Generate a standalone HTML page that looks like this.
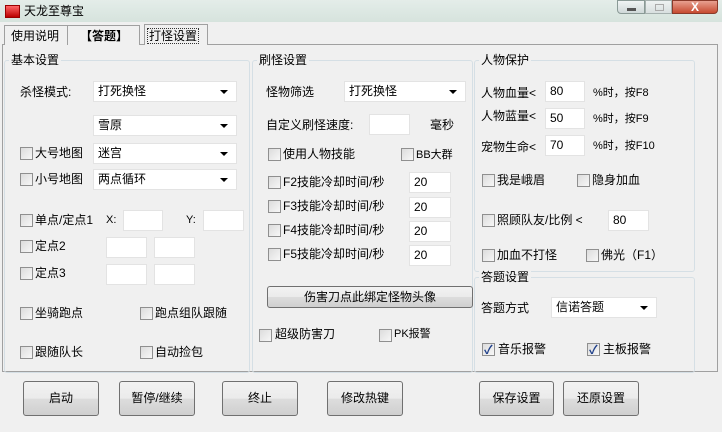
<!DOCTYPE html><html><head><meta charset="utf-8"><style>
*{margin:0;padding:0;box-sizing:border-box}
body{width:722px;height:432px;overflow:hidden;background:#f0f0f0;font:12px "Liberation Sans","Noto Sans CJK SC",sans-serif;color:#000;position:relative}
.a{position:absolute;white-space:nowrap}
.t{position:absolute;white-space:nowrap;line-height:14px}
.grp{position:absolute;border:1px solid #d5dfe5;border-radius:3px}
.gt{position:absolute;background:#f0f0f0;padding:0 2px;line-height:14px;top:-8px;left:4px}
.sel{position:absolute;background:#fff;border:1px solid #e3e3e3;height:21px;line-height:19px;padding-left:4px}
.sel:after{content:"";position:absolute;right:8px;top:8px;border:4px solid transparent;border-top:4px solid #000;border-bottom:0}
.in{position:absolute;background:#fff;border:1px solid #e3e3e3;height:21px;line-height:19px;padding-left:4px}
.cb{position:absolute;width:13px;height:13px;border:1px solid #8f8f8f;background:linear-gradient(135deg,#dcdcdc,#f7f7f7)}
.cb.c:after{content:"✓";position:absolute;left:1px;top:-3px;font-size:12px;color:#1e3f8a;font-weight:bold}
.btn{position:absolute;border:1px solid #707070;border-radius:3px;background:linear-gradient(#f2f2f2 0,#ebebeb 50%,#dddddd 51%,#cfcfcf 100%);text-align:center}
</style></head><body>
<div class="a" style="left:0;top:0;width:722px;height:22px;background:linear-gradient(#e4ede9,#d6e3dd)"></div>
<div class="a" style="left:5px;top:5px;width:15px;height:13px;background:linear-gradient(#f66,#b00);border:1px solid #900"></div>
<div class="t" style="left:24px;top:4px">天龙至尊宝</div>
<div class="a" style="left:617px;top:0;width:28px;height:14px;border:1px solid #8a9a96;border-radius:0 0 0 4px;background:linear-gradient(#f0f4f4,#cfd8d8)"><div class="a" style="left:9px;top:7px;width:9px;height:3px;background:#555"></div></div>
<div class="a" style="left:645px;top:0;width:27px;height:14px;border:1px solid #a5b0ae;background:linear-gradient(#eef2f2,#d8dfdf)"><div class="a" style="left:9px;top:3px;width:9px;height:7px;border:1px solid #aaa"></div></div>
<div class="a" style="left:672px;top:0;width:46px;height:14px;border:1px solid #8a3a2a;border-radius:0 0 4px 0;background:linear-gradient(#e8a090,#c74a30);color:#fff;text-align:center;font-weight:bold;line-height:12px">X</div>
<div class="a" style="left:2px;top:44px;width:716px;height:328px;border:1px solid #a0a0a0;background:#f0f0f0"></div>
<div class="a" style="left:4px;top:25px;width:64px;height:20px;border:1px solid #a0a0a0;border-bottom:0;background:#f0f0f0"></div><div class="t" style="left:11px;top:29px">使用说明</div>
<div class="a" style="left:68px;top:25px;width:72px;height:20px;border:1px solid #a0a0a0;border-bottom:0;border-left:0;background:#f0f0f0"></div><div class="t" style="left:80px;top:29px;font-weight:bold">【答题】</div>
<div class="a" style="left:144px;top:24px;width:64px;height:21px;border:1px solid #a0a0a0;border-bottom:0;background:#f0f0f0"></div><div class="t" style="left:147px;top:28px;border:1px dotted #333;padding:0 1px">打怪设置</div>
<div class="grp" style="left:4px;top:60px;width:246px;height:313px"><div class="gt">基本设置</div></div>
<div class="grp" style="left:252px;top:60px;width:221px;height:313px"><div class="gt">刷怪设置</div></div>
<div class="grp" style="left:474px;top:60px;width:221px;height:212px"><div class="gt">人物保护</div></div>
<div class="grp" style="left:474px;top:277px;width:221px;height:96px"><div class="gt">答题设置</div></div>
<!-- left -->
<div class="t" style="left:20px;top:85px">杀怪模式:</div>
<div class="sel" style="left:93px;top:81px;width:144px">打死换怪</div>
<div class="sel" style="left:93px;top:115px;width:144px">雪原</div>
<div class="cb" style="left:20px;top:147px"></div><div class="t" style="left:35px;top:146px">大号地图</div>
<div class="sel" style="left:93px;top:143px;width:144px">迷宫</div>
<div class="cb" style="left:20px;top:173px"></div><div class="t" style="left:35px;top:172px">小号地图</div>
<div class="sel" style="left:93px;top:169px;width:144px">两点循环</div>
<div class="cb" style="left:20px;top:214px"></div><div class="t" style="left:35px;top:213px">单点/定点1</div>
<div class="t" style="left:106px;top:213px;font-size:11px">X:</div><div class="in" style="left:123px;top:210px;width:40px"></div>
<div class="t" style="left:186px;top:213px;font-size:11px">Y:</div><div class="in" style="left:203px;top:210px;width:41px"></div>
<div class="cb" style="left:20px;top:240px"></div><div class="t" style="left:35px;top:239px">定点2</div>
<div class="in" style="left:106px;top:237px;width:41px"></div><div class="in" style="left:154px;top:237px;width:41px"></div>
<div class="cb" style="left:20px;top:267px"></div><div class="t" style="left:35px;top:266px">定点3</div>
<div class="in" style="left:106px;top:264px;width:41px"></div><div class="in" style="left:154px;top:264px;width:41px"></div>
<div class="cb" style="left:20px;top:307px"></div><div class="t" style="left:35px;top:306px">坐骑跑点</div>
<div class="cb" style="left:140px;top:307px"></div><div class="t" style="left:155px;top:306px">跑点组队跟随</div>
<div class="cb" style="left:20px;top:346px"></div><div class="t" style="left:35px;top:345px">跟随队长</div>
<div class="cb" style="left:140px;top:346px"></div><div class="t" style="left:155px;top:345px">自动捡包</div>
<!-- middle -->
<div class="t" style="left:266px;top:85px">怪物筛选</div>
<div class="sel" style="left:344px;top:81px;width:122px">打死换怪</div>
<div class="t" style="left:266px;top:118px">自定义刷怪速度:</div>
<div class="in" style="left:369px;top:114px;width:41px"></div>
<div class="t" style="left:430px;top:118px">毫秒</div>
<div class="cb" style="left:268px;top:148px"></div><div class="t" style="left:283px;top:147px">使用人物技能</div>
<div class="cb" style="left:401px;top:148px"></div><div class="t" style="left:416px;top:148px;font-size:11px">BB大群</div>
<div class="cb" style="left:268px;top:176px"></div><div class="t" style="left:283px;top:175px">F2技能冷却时间/秒</div><div class="in" style="left:409px;top:172px;width:42px">20</div>
<div class="cb" style="left:268px;top:200px"></div><div class="t" style="left:283px;top:199px">F3技能冷却时间/秒</div><div class="in" style="left:409px;top:197px;width:42px">20</div>
<div class="cb" style="left:268px;top:224px"></div><div class="t" style="left:283px;top:223px">F4技能冷却时间/秒</div><div class="in" style="left:409px;top:221px;width:42px">20</div>
<div class="cb" style="left:268px;top:248px"></div><div class="t" style="left:283px;top:247px">F5技能冷却时间/秒</div><div class="in" style="left:409px;top:245px;width:42px">20</div>
<div class="btn" style="left:267px;top:286px;width:206px;height:22px;line-height:20px">伤害刀点此绑定怪物头像</div>
<div class="cb" style="left:259px;top:329px"></div><div class="t" style="left:275px;top:327px">超级防害刀</div>
<div class="cb" style="left:379px;top:329px"></div><div class="t" style="left:394px;top:327px;font-size:11px">PK报警</div>
<!-- right -->
<div class="t" style="left:481px;top:86px">人物血量&lt;</div><div class="in" style="left:545px;top:81px;width:40px">80</div><div class="t" style="left:593px;top:86px;font-size:11px">%时，按F8</div>
<div class="t" style="left:481px;top:109px">人物蓝量&lt;</div><div class="in" style="left:545px;top:108px;width:40px">50</div><div class="t" style="left:593px;top:112px;font-size:11px">%时，按F9</div>
<div class="t" style="left:481px;top:140px">宠物生命&lt;</div><div class="in" style="left:545px;top:135px;width:40px">70</div><div class="t" style="left:593px;top:139px;font-size:11px">%时，按F10</div>
<div class="cb" style="left:482px;top:174px"></div><div class="t" style="left:497px;top:173px">我是峨眉</div>
<div class="cb" style="left:577px;top:174px"></div><div class="t" style="left:592px;top:173px">隐身加血</div>
<div class="cb" style="left:482px;top:214px"></div><div class="t" style="left:497px;top:213px">照顾队友/比例 &lt;</div>
<div class="in" style="left:608px;top:210px;width:41px">80</div>
<div class="cb" style="left:482px;top:249px"></div><div class="t" style="left:497px;top:248px">加血不打怪</div>
<div class="cb" style="left:586px;top:249px"></div><div class="t" style="left:601px;top:248px">佛光（F1）</div>
<div class="t" style="left:481px;top:301px">答题方式</div>
<div class="sel" style="left:551px;top:297px;width:106px">信诺答题</div>
<div class="cb c" style="left:482px;top:343px"></div><div class="t" style="left:498px;top:342px">音乐报警</div>
<div class="cb c" style="left:587px;top:343px"></div><div class="t" style="left:603px;top:342px">主板报警</div>
<!-- bottom -->
<div class="btn" style="left:23px;top:381px;width:76px;height:35px;line-height:33px">启动</div>
<div class="btn" style="left:119px;top:381px;width:76px;height:35px;line-height:33px">暂停/继续</div>
<div class="btn" style="left:222px;top:381px;width:76px;height:35px;line-height:33px">终止</div>
<div class="btn" style="left:327px;top:381px;width:76px;height:35px;line-height:33px">修改热键</div>
<div class="btn" style="left:479px;top:381px;width:75px;height:35px;line-height:33px">保存设置</div>
<div class="btn" style="left:563px;top:381px;width:76px;height:35px;line-height:33px">还原设置</div>
</body></html>
